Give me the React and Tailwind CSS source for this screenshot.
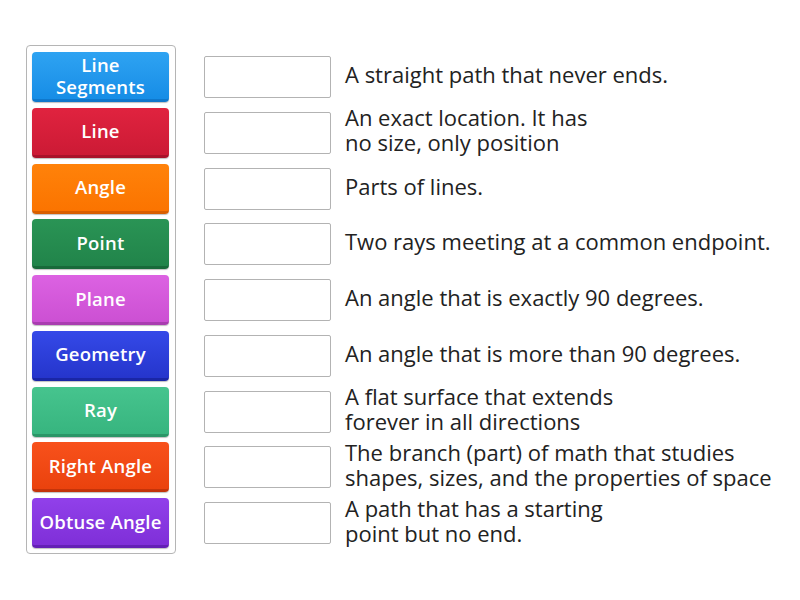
const tiles = [
  { label: "Line Segments", cls: "bg-gradient-to-b from-[#2ea3f2] to-[#168de6] border-[#0f78cc]" },
  { label: "Line", cls: "bg-gradient-to-b from-[#e0233f] to-[#cc1a35] border-[#a9122a]" },
  { label: "Angle", cls: "bg-gradient-to-b from-[#ff820a] to-[#fb7400] border-[#d85f00]" },
  { label: "Point", cls: "bg-gradient-to-b from-[#2a9455] to-[#21844a] border-[#186a3a]" },
  { label: "Plane", cls: "bg-gradient-to-b from-[#dc62e2] to-[#cc50d3] border-[#a93db0]" },
  { label: "Geometry", cls: "bg-gradient-to-b from-[#3549e8] to-[#2535cc] border-[#1a26a6]" },
  { label: "Ray", cls: "bg-gradient-to-b from-[#46c48e] to-[#37b57f] border-[#2a9667]" },
  { label: "Right Angle", cls: "bg-gradient-to-b from-[#f8511b] to-[#ea420d] border-[#c4340a]" },
  { label: "Obtuse Angle", cls: "bg-gradient-to-b from-[#9140ea] to-[#7f2fd8] border-[#6420b5]" },
];

const clues = [
  ["A straight path that never ends."],
  ["An exact location. It has", "no size, only position"],
  ["Parts of lines."],
  ["Two rays meeting at a common endpoint."],
  ["An angle that is exactly 90 degrees."],
  ["An angle that is more than 90 degrees."],
  ["A flat surface that extends", "forever in all directions"],
  ["The branch (part) of math that studies", "shapes, sizes, and the properties of space"],
  ["A path that has a starting", "point but no end."],
];

export default function App() {
  return (
    <div className="w-[800px] h-[600px] bg-white font-['Open_Sans',sans-serif] flex items-start pt-[45px] pl-[26px]">
      {/* tiles */}
      <div className="w-[150px] border border-[#b5b5b5] rounded-[4px] pt-[6px] pb-[5px] pl-[5px] pr-[6px] flex flex-col gap-[5.75px]">
        {tiles.map((t) => (
          <div
            key={t.label}
            className={`h-[50px] rounded-[4px] border-b-[3px] shadow-[0_1px_1px_rgba(0,0,0,0.25)] flex items-center justify-center text-center text-white text-[18.5px] leading-[22px] font-semibold tracking-[0.2px] ${t.cls}`}
          >
            {t.label === "Line Segments" ? (
              <span>Line<br />Segments</span>
            ) : (
              t.label
            )}
          </div>
        ))}
      </div>

      {/* answer slots */}
      <div className="ml-[28px] mt-[7px] flex flex-col gap-[5.75px]">
        {clues.map((lines, i) => (
          <div key={i} className="h-[50px] flex items-center">
            <div className="w-[127px] h-[42px] border border-[#b3b3b3] rounded-[2px] bg-white shrink-0" />
            <p className="ml-[14px] -mt-[5px] text-[22px] leading-[25px] text-[#222] whitespace-nowrap">
              {lines[0]}
              {lines[1] && (
                <>
                  <br />
                  {lines[1]}
                </>
              )}
            </p>
          </div>
        ))}
      </div>
    </div>
  );
}
